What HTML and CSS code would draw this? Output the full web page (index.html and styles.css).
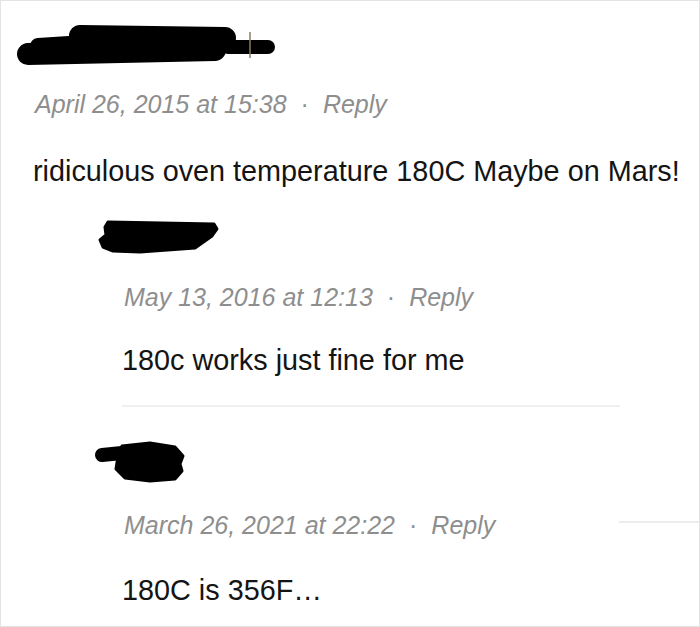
FILE: index.html
```html
<!DOCTYPE html>
<html>
<head>
<meta charset="utf-8">
<link rel="stylesheet" href="styles.css">
</head>
<body>
<div class="frame">
  <div class="comment top">
    <svg class="blob blob1" width="265" height="46" viewBox="0 0 265 46">
      <g stroke="#000" stroke-linecap="round" fill="none">
        <line x1="13" y1="32" x2="200" y2="28" stroke-width="22"/>
        <line x1="65" y1="14" x2="210" y2="16" stroke-width="22"/>
        <line x1="23" y1="24" x2="85" y2="20" stroke-width="16"/>
        <line x1="213" y1="25" x2="253" y2="25" stroke-width="14"/>
      </g>
      <line x1="235" y1="10" x2="235" y2="36" stroke="#8a7a66" stroke-width="1.5"/>
    </svg>
    <div class="meta"><span>April 26, 2015 at 15:38</span><span class="dot">·</span><span>Reply</span></div>
    <p class="text">ridiculous oven temperature 180C Maybe on Mars!</p>
  </div>

  <div class="comment reply r1">
    <svg class="blob blob2" width="126" height="40" viewBox="0 0 126 40">
      <path d="M12 6 L118 8 L121 13 L116 20 L99 32 L44 36 L17 35 L7 31 L4 24 L10 19 L9 11 Z" fill="#000" stroke="#000" stroke-width="3" stroke-linejoin="round"/>
    </svg>
    <div class="meta"><span>May 13, 2016 at 12:13</span><span class="dot">·</span><span>Reply</span></div>
    <p class="text">180c works just fine for me</p>
    <div class="sep"></div>
  </div>

  <div class="comment reply r2">
    <svg class="blob blob3" width="92" height="44" viewBox="0 0 92 44">
      <line x1="8" y1="15" x2="28" y2="13" stroke="#000" stroke-width="14" stroke-linecap="round"/>
      <path d="M28 6 L56 3 L81 7 L89 16 L86 24 L88 31 L81 39 L56 41 L31 38 L22 29 L24 16 Z" fill="#000" stroke="#000" stroke-width="3" stroke-linejoin="round"/>
    </svg>
    <div class="meta-row">
      <div class="meta"><span>March 26, 2021 at 22:22</span><span class="dot">·</span><span>Reply</span></div>
      <div class="side-line"></div>
    </div>
    <p class="text">180C is 356F…</p>
  </div>
</div>
</body>
</html>
```

FILE: styles.css
```css
html, body {
  margin: 0;
  padding: 0;
  background: #fff;
}

.frame {
  width: 700px;
  height: 627px;
  box-sizing: border-box;
  border: 1px solid #e3e3e3;
  background: #fff;
  font-family: "Liberation Sans", Arial, sans-serif;
  overflow: hidden;
  display: flex;
  flex-direction: column;
}

.comment {
  display: flex;
  flex-direction: column;
}

.top {
  padding-left: 32px;
  padding-top: 21px;
}

.reply {
  padding-left: 121px;
}

.blob {
  display: block;
}

.blob1 {
  margin-left: -18px;
}

.blob2 {
  margin-left: -26px;
  margin-top: 28px;
}

.blob3 {
  margin-left: -28px;
  margin-top: 33px;
}

.meta {
  display: flex;
  gap: 14px;
  font-size: 25px;
  line-height: 30px;
  font-style: italic;
  color: #8e8e8e;
  white-space: nowrap;
}

.dot {
  font-style: normal;
}

.top .meta {
  margin-top: 21px;
  padding-left: 2px;
}

.r1 .meta {
  margin-top: 26px;
  padding-left: 2px;
}

.text {
  margin: 33px 0 0 0;
  font-size: 28.8px;
  line-height: 34px;
  color: #141414;
}

.top .text {
  margin-top: 35px;
}

.r1 .text {
  margin-top: 31px;
}

.sep {
  height: 2px;
  width: 498px;
  background: #efefef;
  margin-top: 28px;
}

.meta-row {
  display: flex;
  align-items: flex-start;
  margin-top: 26px;
  padding-left: 2px;
}

.side-line {
  margin-left: auto;
  width: 80px;
  height: 2px;
  background: #ececec;
  margin-top: 11px;
}
```
